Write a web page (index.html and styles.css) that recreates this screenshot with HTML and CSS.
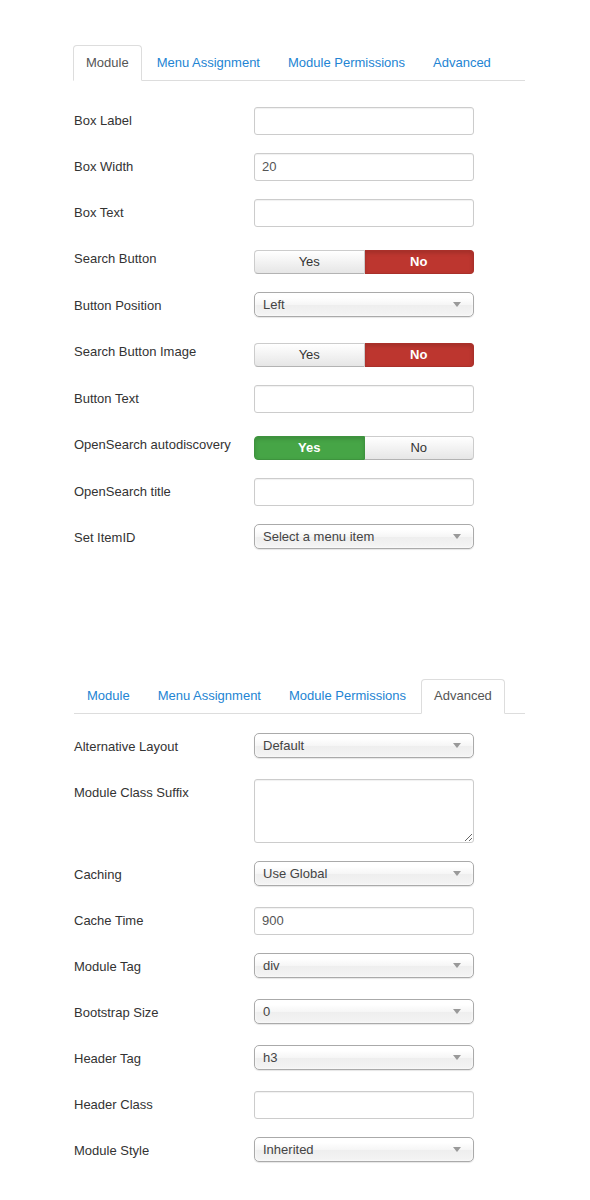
FILE: index.html
```html
<!DOCTYPE html>
<html>
<head>
<meta charset="utf-8">
<link rel="stylesheet" href="styles.css">
</head>
<body>
<div class="page">
  <section class="panel panel-first">
    <ul class="tabs">
      <li class="tab active">Module</li>
      <li class="tab">Menu Assignment</li>
      <li class="tab">Module Permissions</li>
      <li class="tab">Advanced</li>
    </ul>
    <div class="form form-first">
      <div class="row"><label class="lbl">Box Label</label><div class="input"></div></div>
      <div class="row"><label class="lbl">Box Width</label><div class="input">20</div></div>
      <div class="row"><label class="lbl">Box Text</label><div class="input"></div></div>
      <div class="row row-toggle"><label class="lbl">Search Button</label>
        <div class="toggle"><span class="opt">Yes</span><span class="opt on-no">No</span></div></div>
      <div class="row"><label class="lbl">Button Position</label><div class="select"><span>Left</span><i class="caret"></i></div></div>
      <div class="row row-toggle"><label class="lbl">Search Button Image</label>
        <div class="toggle"><span class="opt">Yes</span><span class="opt on-no">No</span></div></div>
      <div class="row"><label class="lbl">Button Text</label><div class="input"></div></div>
      <div class="row row-toggle"><label class="lbl">OpenSearch autodiscovery</label>
        <div class="toggle"><span class="opt on-yes">Yes</span><span class="opt">No</span></div></div>
      <div class="row"><label class="lbl">OpenSearch title</label><div class="input"></div></div>
      <div class="row"><label class="lbl">Set ItemID</label><div class="select"><span>Select a menu item</span><i class="caret"></i></div></div>
    </div>
  </section>

  <section class="panel panel-second">
    <ul class="tabs tabs-shift">
      <li class="tab">Module</li>
      <li class="tab">Menu Assignment</li>
      <li class="tab">Module Permissions</li>
      <li class="tab active">Advanced</li>
    </ul>
    <div class="form form-second">
      <div class="row"><label class="lbl">Alternative Layout</label><div class="select"><span>Default</span><i class="caret"></i></div></div>
      <div class="row row-area"><label class="lbl">Module Class Suffix</label><textarea class="area"></textarea></div>
      <div class="row"><label class="lbl">Caching</label><div class="select"><span>Use Global</span><i class="caret"></i></div></div>
      <div class="row"><label class="lbl">Cache Time</label><div class="input">900</div></div>
      <div class="row"><label class="lbl">Module Tag</label><div class="select"><span>div</span><i class="caret"></i></div></div>
      <div class="row"><label class="lbl">Bootstrap Size</label><div class="select"><span>0</span><i class="caret"></i></div></div>
      <div class="row"><label class="lbl">Header Tag</label><div class="select"><span>h3</span><i class="caret"></i></div></div>
      <div class="row"><label class="lbl">Header Class</label><div class="input"></div></div>
      <div class="row"><label class="lbl">Module Style</label><div class="select"><span>Inherited</span><i class="caret"></i></div></div>
    </div>
  </section>
</div>
</body>
</html>
```

FILE: styles.css
```css
* { box-sizing: border-box; }
html, body { margin: 0; padding: 0; background: #fff; }
body {
  font-family: "Liberation Sans", Arial, sans-serif;
  font-size: 13px;
  line-height: 18px;
  color: #333;
}
.page { padding: 45px 0 0 73px; width: 590px; }
.panel { width: 452px; }
.panel-second { margin-top: 127px; }

.tabs {
  list-style: none;
  margin: 0;
  padding: 0;
  display: flex;
  border-bottom: 1px solid #ddd;
}
.tabs-shift { margin-left: 1px; width: 451px; }
.tab {
  padding: 8px 12px;
  line-height: 18px;
  margin-right: 2px;
  margin-bottom: -1px;
  border: 1px solid transparent;
  border-radius: 4px 4px 0 0;
  color: #2384d3;
}
.tab.active {
  color: #555;
  background: #fff;
  border-color: #ddd #ddd transparent #ddd;
}
.tabs-shift .tab { padding-top: 7px; }

.form { padding-left: 1px; }
.form-first { margin-top: 26px; }
.form-second { margin-top: 19px; }

.row {
  display: flex;
  align-items: flex-start;
  margin-bottom: 18px;
  min-height: 28px;
}
.row-toggle { min-height: 29px; }
.lbl {
  width: 180px;
  padding-top: 5px;
  color: #333;
}
.input {
  width: 220px;
  height: 28px;
  border: 1px solid #ccc;
  border-radius: 3px;
  padding: 4px 7px;
  line-height: 18px;
  color: #555;
  box-shadow: inset 0 1px 1px rgba(0,0,0,0.06);
}
.area {
  width: 220px;
  height: 64px;
  border: 1px solid #ccc;
  border-radius: 3px;
  margin: 0;
  padding: 4px 6px;
  font: inherit;
  resize: both;
  box-shadow: inset 0 1px 1px rgba(0,0,0,0.06);
}
.select {
  width: 220px;
  height: 25px;
  border: 1px solid #aaa;
  border-radius: 5px;
  background: linear-gradient(#ffffff 20%, #f6f6f6 50%, #eeeeee 52%, #f4f4f4 100%);
  box-shadow: 0 0 3px #fff inset, 0 1px 1px rgba(0,0,0,0.1);
  display: flex;
  align-items: center;
  padding: 0 12px 0 8px;
  color: #444;
  line-height: 23px;
}
.select span { flex: 1; }
.caret {
  width: 0; height: 0;
  border-left: 4px solid transparent;
  border-right: 4px solid transparent;
  border-top: 5px solid #999;
}

.toggle {
  margin-top: 5px;
  width: 220px;
  height: 24px;
  display: flex;
}
.opt {
  flex: 1;
  text-align: center;
  line-height: 22px;
  border: 1px solid #ccc;
  border-bottom-color: #b3b3b3;
  background: linear-gradient(#ffffff, #e6e6e6);
  color: #333;
}
.opt:first-child { border-radius: 4px 0 0 4px; }
.opt:last-child { border-radius: 0 4px 4px 0; border-left: 0; }
.opt.on-no {
  background: #bd362f;
  border-color: #a9302a;
  color: #fff;
  font-weight: bold;
  box-shadow: inset 0 2px 4px rgba(0,0,0,0.15);
}
.opt.on-yes {
  background: #46a546;
  border-color: #3e933e;
  color: #fff;
  font-weight: bold;
  box-shadow: inset 0 2px 4px rgba(0,0,0,0.15);
}
```
